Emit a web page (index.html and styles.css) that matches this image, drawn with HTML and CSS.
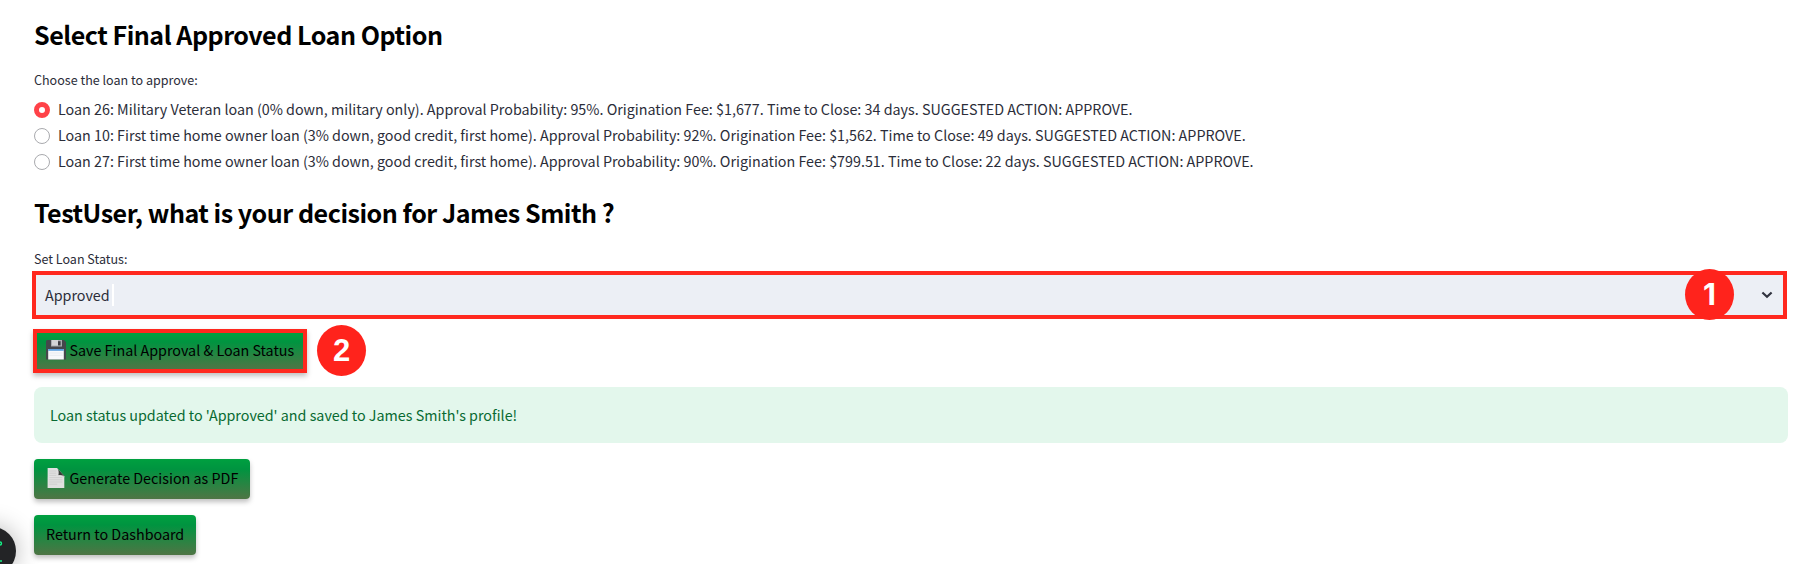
FILE: index.html
```html
<!DOCTYPE html>
<html lang="en">
<head>
<meta charset="utf-8">
<title>Loan decision</title>
<link rel="stylesheet" href="styles.css">
</head>
<body>
<main class="page">
  <h3 class="title">Select Final Approved Loan Option</h3>
  <div class="label label-radio">Choose the loan to approve:</div>
  <div class="radios">
    <div class="radio"><span class="dot dot-on"></span><span class="radio-text">Loan 26: Military Veteran loan (0% down, military only). Approval Probability: 95%. Origination Fee: $1,677. Time to Close: 34 days. SUGGESTED ACTION: APPROVE.</span></div>
    <div class="radio"><span class="dot"></span><span class="radio-text">Loan 10: First time home owner loan (3% down, good credit, first home). Approval Probability: 92%. Origination Fee: $1,562. Time to Close: 49 days. SUGGESTED ACTION: APPROVE.</span></div>
    <div class="radio"><span class="dot"></span><span class="radio-text">Loan 27: First time home owner loan (3% down, good credit, first home). Approval Probability: 90%. Origination Fee: $799.51. Time to Close: 22 days. SUGGESTED ACTION: APPROVE.</span></div>
  </div>
  <h3 class="title title-second">TestUser, what is your decision for James Smith ?</h3>
  <div class="label label-select">Set Loan Status:</div>
  <div class="select">
    <span class="value">Approved</span><span class="caret"></span>
    <svg class="chevron" width="12" height="8" viewBox="0 0 12 8"><path d="M1.4 1.5 6 5.7 10.6 1.5" fill="none" stroke="#31333f" stroke-width="2.2"/></svg>
    <span class="badge badge-one">1</span>
  </div>
  <div class="save-row">
    <button class="btn btn-marked">
      <svg class="icon" width="20" height="20" viewBox="0 0 20 20">
        <path d="M1 0h17l2 2v17.5H0V1z" fill="#45474c"/>
        <path d="M5 0h11v6.5H5z" fill="#a9acb0"/><path d="M6 0h6v5.5H6z" fill="#d2d4d6"/><path d="M12 1.2h2.6v4.2H12z" fill="#3c3e43"/>
        <path d="M2.2 9h15.6v10.5H2.2z" fill="#f8f9fb"/><path d="M2.2 9h15.6v1.8H2.2z" fill="#5a9fe0"/>
        <path d="M3.5 13h13M3.5 15.3h13" stroke="#dfe3ea" stroke-width=".6"/>
      </svg>
      <span>Save Final Approval &amp; Loan Status</span>
    </button>
    <span class="badge">2</span>
  </div>
  <div class="alert">Loan status updated to 'Approved' and saved to James Smith's profile!</div>
  <button class="btn btn-pdf">
    <svg class="icon" width="20" height="20" viewBox="0 0 20 20">
      <path d="M1.600 0H11l7.300 8.500V20H1.600z" fill="#e0e0e0"/>
      <path d="M11 0 20 0V9.500H18.300V8.300z" fill="none"/>
      <path d="M11 0c1.600 2 1.400 4.500 .8 7.800 2.200-.6 4.600-.2 6.500 1.700V8z" fill="#c4c4c4"/>
      <path d="M11.800 .8 18.300 8.300C16.500 7 14.500 6.600 12.500 7.100 13.100 5 12.900 3 11.800 .8z" fill="#343d37"/>
      <path d="M3.300 3h7M3.300 5.200h7M3.300 7.400h7M3.300 9.600h13M3.300 11.800h13M3.300 14h13M3.300 16.200h8" stroke="#c9c9c9" stroke-width=".7"/>
    </svg>
    <span>Generate Decision as PDF</span>
  </button>
  <button class="btn">Return to Dashboard</button>
</main>
<div class="widget"><svg width="48" height="48" viewBox="0 0 48 48"><circle cx="8" cy="16.500" r="1.500" fill="none" stroke="#13f287" stroke-width="1.400"/><path d="M0 34h10" stroke="#13f287" stroke-width="1.700"/></svg></div>
</body>
</html>
```
FILE: styles.css
```css
* { box-sizing: border-box; }
body {
  margin: 0;
  height: 564px;
  overflow: hidden;
  position: relative;
  background: #fff;
  color: #2b2d39;
  font: 14.326px/24px "Noto Sans CJK JP", "Noto Sans CJK SC", sans-serif;
}
.page {
  display: flex;
  flex-direction: column;
  align-items: flex-start;
  padding: 17px 25px 0 34px;
}
.title {
  margin: 0;
  height: 34px;
  line-height: 34px;
  font-size: 25.07px;
  font-weight: 700;
  letter-spacing: -0.48px;
  color: #000;
  white-space: nowrap;
}
.title-second { margin-top: 21px; }
.label {
  height: 22px;
  line-height: 22px;
  font-size: 12.54px;
}
.label-radio { margin-top: 18px; }
.label-select { margin: 19px 0 1px; }
.radios {
  display: flex;
  flex-direction: column;
  gap: 2px;
  margin-top: 7px;
}
.radio {
  display: flex;
  align-items: center;
  gap: 8px;
  height: 24px;
  white-space: nowrap;
}
.radio-text { height: 26px; }
.dot {
  width: 16px;
  height: 16px;
  flex: none;
  border: 1px solid #a9aaae;
  border-radius: 50%;
  background: #fff;
}
.dot-on { border: 5px solid #ff4248; }
.select {
  position: relative;
  display: flex;
  align-items: center;
  align-self: stretch;
  height: 48px;
  margin: 0 1px 0 -2px;
  padding: 0 10px 0 9px;
  border: 4px solid #ff281e;
  background: #eceff5;
}
.caret {
  width: 2px;
  height: 22px;
  margin-left: 2px;
  background: #fff;
}
.chevron { margin-left: auto; }
.badge {
  display: flex;
  align-items: center;
  justify-content: center;
  width: 49px;
  height: 51px;
  border-radius: 50%;
  background: #ff231c;
  color: #fff;
  font: 700 31px/51px "Liberation Sans", Arial, sans-serif;
}
.badge-one {
  position: absolute;
  top: -6px;
  right: 49px;
  font: 700 30px/51px Inter, sans-serif;
}
.save-row {
  display: flex;
  align-items: center;
  gap: 10px;
  height: 51px;
  margin: 6px 0 0 -1px;
}
.btn {
  display: flex;
  align-items: center;
  gap: 3.5px;
  height: 40px;
  margin: 0;
  padding: 0 12px 2px;
  border: 0;
  border-radius: 4px;
  background: linear-gradient(180deg, #00a040 0%, #009440 25%, #4f7545 100%);
  box-shadow: 0 3px 5px rgba(0, 0, 0, 0.25);
  color: #000;
  font: inherit;
  white-space: nowrap;
}
.btn-marked {
  height: 44px;
  padding: 0 9px 2px;
  border: 4px solid #ff281e;
  border-radius: 0;
}
.icon { flex: none; }
.alert {
  align-self: stretch;
  height: 56px;
  margin: 11px 0 16px;
  padding: 16px;
  border-radius: 8px;
  background: #e3f7ec;
  color: #086a32;
}
.btn-pdf { margin-bottom: 16px; }
.widget {
  position: absolute;
  left: -32px;
  top: 527px;
  width: 48px;
  height: 48px;
  border-radius: 50%;
  background: #232426;
  box-shadow: 0 0 24px rgba(0, 0, 0, 0.3);
}
.widget svg { display: block; margin-left: 24px; }
```
